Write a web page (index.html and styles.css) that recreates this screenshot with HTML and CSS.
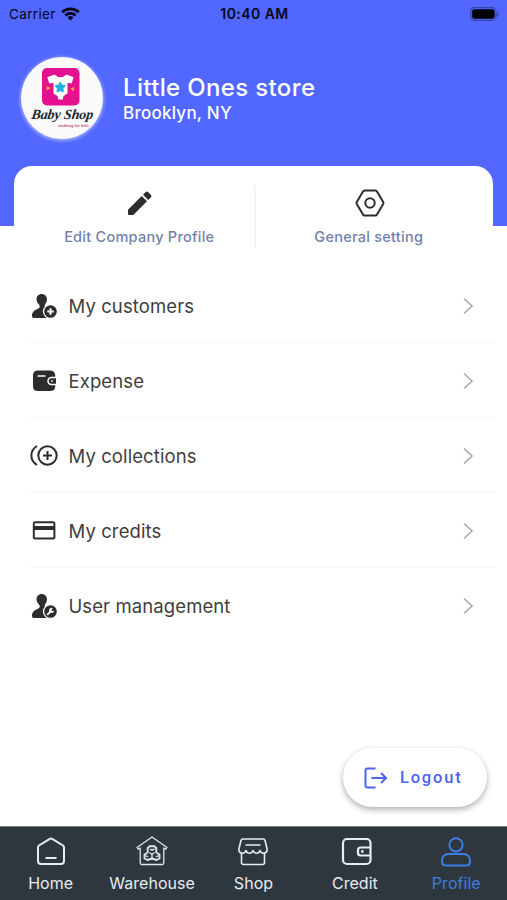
FILE: index.html
```html
<!DOCTYPE html>
<html lang="en">
<head>
  <meta charset="UTF-8">
  <meta name="viewport" content="width=device-width, initial-scale=1.0">
  <title>Profile</title>
  <link rel="stylesheet" href="styles.css">
</head>
<body>
  <div class="screen">
    <header class="header">
      <div class="status-bar">
        <div class="carrier">
          <span>Carrier</span>
          <svg width="19" height="14" viewBox="0 0 19 14" fill="none" stroke="#050817" stroke-width="2.7">
            <path d="M1.2 5.3a12 12 0 0 1 16.6 0M4.3 8.5a7.6 7.6 0 0 1 10.4 0"/>
            <path d="M9.5 13.5 6.5 10.5a4.4 4.4 0 0 1 6 0z" fill="#050817" stroke="none"/>
          </svg>
        </div>
        <span class="time">10:40 AM</span>
        <svg class="battery" width="30" height="14" viewBox="0 0 30 14">
          <rect x=".7" y=".7" width="25.4" height="12.6" rx="3.8" fill="none" stroke="#3443a8" stroke-width="1.2"/>
          <rect x="2.2" y="2.2" width="22.4" height="9.6" rx="2.3" fill="#000"/>
          <path d="M27.5 5v4.200q1.600-.7 1.600-2.100t-1.600-2.100z" fill="#3443a8"/>
        </svg>
      </div>
      <div class="store">
        <div class="avatar">
          <svg width="82" height="82" viewBox="0 0 82 82">
            <rect x="21" y="11" width="37.500" height="37.500" rx="5" fill="#e5108f"/>
            <path d="M33.500 17.500q6 5.500 12 0l7 2.700-1.800 6.300-4.200-.8v10.800l-4 2.500-.8 3.500h-4.400l-.8-3.500-4-2.500V25.700l-4.200.8-2-6.300z" fill="#fff"/>
            <path d="m39.200 25.500 1.500 2.700 3.200.6-2.200 2.400.4 3.300-2.900-1.300-2.900 1.300.4-3.300-2.200-2.400 3.200-.6z" fill="#22b5e2" stroke="#22b5e2" stroke-width="1.500" stroke-linejoin="round"/>
            <path d="m25.500 29 4.200 2-4 2.500zM53.500 30l-4.300 1.600 3.600 3z" fill="#f9a72c"/>
            <g transform="translate(10 62) skewX(-8)">
              <text class="logo-name">Baby Shop</text>
            </g>
            <text class="logo-tagline" x="37" y="69.700" textLength="31" lengthAdjust="spacingAndGlyphs">clothing for kids</text>
          </svg>
        </div>
        <div class="store-info">
          <h1>Little Ones store</h1>
          <p>Brooklyn, NY</p>
        </div>
      </div>
    </header>

    <section class="actions">
      <a class="action">
        <svg class="pencil" width="28" height="28" viewBox="0 0 28 28" fill="#2d2d2d">
          <path d="M2 20.700 15.700 7l5.300 5.300L7.300 26H3q-1 0-1-1zM17 5.700l2.700-2.700q1.200-1 2.400 0l2.900 2.900q1 1.200 0 2.400L22.300 11z"/>
        </svg>
        <span>Edit Company Profile</span>
      </a>
      <a class="action">
        <svg class="hexagon" width="30" height="28" viewBox="0 0 30 28" fill="none" stroke="#2d2d2d" stroke-width="2" stroke-linejoin="round">
          <path d="M9.500 1.500h11q1 0 1.500 1l6.200 10.500q.6 1 0 2L22 25.500q-.5 1-1.500 1h-11q-1 0-1.500-1L1.800 15q-.6-1 0-2L8 2.500q.5-1 1.500-1z"/>
          <circle cx="15" cy="14" r="4.700"/>
        </svg>
        <span>General setting</span>
      </a>
    </section>

    <ul class="menu">
      <li>
        <svg class="icon" width="28" height="28" viewBox="0 0 28 28">
          <path d="M11.700 2c3.200 0 5.300 2.300 5.300 5.300 0 2.200-1 3.800-2 5.100-.7 1.200-.1 2.200 1.200 2.800l3.800 1.600v9.200H4q-2.100 0-2.100-1.900 0-4.300 3.600-6.100l2.800-1.400c1.600-.8 1.900-2 1-3.500C8 11.500 6.500 9.700 6.500 7.300 6.500 4.300 8.500 2 11.700 2z" fill="#2d2d2d"/>
          <circle cx="20.500" cy="19.500" r="7.600" fill="#fff"/>
          <circle cx="20.500" cy="19.500" r="6.300" fill="#2d2d2d"/>
          <path d="M20.500 16.300v6.400M17.300 19.500h6.400" stroke="#fff" stroke-width="2"/>
        </svg>
        <span class="label">My customers</span>
        <svg class="arrow" width="12" height="18" viewBox="0 0 12 18"><path d="m2 1.500 8 7.500-8 7.500"/></svg>
      </li>
      <li>
        <svg class="icon" width="28" height="28" viewBox="0 0 28 28">
          <path d="M8 3.500h12q4.800 0 5.200 4.500v12q-.2 4-5.200 4H8q-5 0-5-4.500V8.500q0-5 5-5z" fill="#2d2d2d"/>
          <path d="M7.500 9h8" stroke="#fff" stroke-width="1.500"/>
          <path d="M26 10.500h-4.500a3.500 3.500 0 0 0 0 7H26" fill="#2d2d2d" stroke="#fff" stroke-width="1.500"/>
          <path d="M21.200 14h1.600" stroke="#fff" stroke-width="1.500"/>
        </svg>
        <span class="label">Expense</span>
        <svg class="arrow" width="12" height="18" viewBox="0 0 12 18"><path d="m2 1.500 8 7.500-8 7.500"/></svg>
      </li>
      <li>
        <svg class="icon" width="28" height="28" viewBox="0 0 28 28" fill="none" stroke="#2d2d2d" stroke-width="2">
          <circle cx="17.500" cy="13.500" r="9.200"/>
          <path d="M17.500 9v9M13 13.500h9M7 4C-.5 8.500-.5 18.500 7 23"/>
        </svg>
        <span class="label">My collections</span>
        <svg class="arrow" width="12" height="18" viewBox="0 0 12 18"><path d="m2 1.500 8 7.500-8 7.500"/></svg>
      </li>
      <li>
        <svg class="icon" width="28" height="28" viewBox="0 0 28 28">
          <rect x="3.800" y="5.300" width="20.600" height="16.200" rx="1.500" fill="none" stroke="#2d2d2d" stroke-width="2"/>
          <path d="M3 11h22" stroke="#2d2d2d" stroke-width="4"/>
        </svg>
        <span class="label">My credits</span>
        <svg class="arrow" width="12" height="18" viewBox="0 0 12 18"><path d="m2 1.500 8 7.500-8 7.500"/></svg>
      </li>
      <li>
        <svg class="icon" width="28" height="28" viewBox="0 0 28 28">
          <path d="M11.700 2c3.200 0 5.300 2.300 5.300 5.300 0 2.200-1 3.800-2 5.100-.7 1.200-.1 2.200 1.200 2.800l3.800 1.600v9.200H4q-2.100 0-2.100-1.900 0-4.300 3.600-6.100l2.800-1.400c1.600-.8 1.900-2 1-3.500C8 11.500 6.500 9.700 6.500 7.300 6.500 4.300 8.500 2 11.700 2z" fill="#2d2d2d"/>
          <circle cx="20.500" cy="19.500" r="7.600" fill="#fff"/>
          <circle cx="20.500" cy="19.500" r="6.300" fill="#2d2d2d"/>
          <path d="m17.200 22.800 4.200-4.200" stroke="#fff" stroke-width="1.900"/>
          <path d="M22.800 16.200a2.500 2.500 0 1 0 1.300 2.500l-1.800.2-1-1z" fill="#fff"/>
        </svg>
        <span class="label">User management</span>
        <svg class="arrow" width="12" height="18" viewBox="0 0 12 18"><path d="m2 1.500 8 7.500-8 7.500"/></svg>
      </li>
    </ul>

    <button class="logout-btn">
      <svg width="24" height="22" viewBox="0 0 24 22" fill="none" stroke="#4b63ee" stroke-width="2">
        <path d="M11.500 1.500H3.500q-2 0-2 2v15q0 2 2 2h8M7.500 11h14M17 6l5 5-5 5"/>
      </svg>
      <span>Logout</span>
    </button>

    <nav class="tab-bar">
      <a class="tab">
        <svg width="32" height="32" viewBox="0 0 32 32" fill="none" stroke="#e4edf3" stroke-width="2" stroke-linejoin="round">
          <path d="M16 2.500q.6 0 1.200.4l10.800 6.600q1 .7 1 1.800V25q0 3-3 3H6q-3 0-3-3V11.300q0-1.100 1-1.800l10.800-6.600q.6-.4 1.200-.4zM10.500 22h11"/>
        </svg>
        <span>Home</span>
      </a>
      <a class="tab">
        <svg width="32" height="32" viewBox="0 0 32 32" fill="none" stroke="#dbe5eb" stroke-width="1.300" stroke-linejoin="round">
          <path d="M16 1 1 11.500l1.200 1.700 2-1.200v15q0 1.500 1.500 1.500h20.600q1.500 0 1.500-1.500V12l2 1.200 1.200-1.700z"/>
          <path d="M13.500 10.200h5l1.800 2v4.300l3.200 2v4L20.500 24 16 22.500 11.500 24l-3-1.500v-4l3.200-2v-4.300z" stroke-width="1.900"/>
          <path d="m14 13 2 1.200 2.500-1.200M16 22v-3.500l-2.500-2M16 18.500l2.500-2M9.500 19.500l2.500 1.300M22.500 19.500 20 20.800" stroke-width="1.400"/>
        </svg>
        <span>Warehouse</span>
      </a>
      <a class="tab">
        <svg width="32" height="32" viewBox="0 0 32 32" fill="none" stroke="#e4edf3" stroke-width="1.600" stroke-linejoin="round">
          <path d="M6 3h20q1.700 0 2.100 1.700l2 8.300c.5 5-5.600 5.600-7.100 1.500-1.500 3.700-5.500 3.700-7 0-1.500 3.700-5.500 3.700-7 0C7.500 18.600 1.400 18 1.900 13l2-8.300Q4.300 3 6 3zM4.500 16.500v10q0 2 2 2h19q2 0 2-2v-10"/>
          <path d="M9 9h14" stroke-linecap="round"/>
        </svg>
        <span>Shop</span>
      </a>
      <a class="tab">
        <svg class="wallet" width="32" height="32" viewBox="0 0 32 32" fill="none" stroke="#e4edf3" stroke-width="2.200">
          <rect x="2" y="3" width="27.500" height="25" rx="4"/>
          <path d="M29.500 11.500h-10q-2.500 0-2.500 2.500v3q0 2.500 2.500 2.500h10"/>
          <circle cx="21.300" cy="15.500" r=".8" stroke-width="1.300"/>
        </svg>
        <span>Credit</span>
      </a>
      <a class="tab tab--active">
        <svg width="32" height="32" viewBox="0 0 32 32" fill="none" stroke="#3c7de3" stroke-width="2">
          <circle cx="16" cy="8.800" r="6.600"/>
          <path d="M8.500 18h15q6.500 0 6.500 7.500 0 4-3.500 4h-21q-3.500 0-3.500-4Q2 18 8.500 18z"/>
        </svg>
        <span>Profile</span>
      </a>
    </nav>
  </div>
</body>
</html>
```

FILE: styles.css
```css
* {
  box-sizing: border-box;
}

body {
  margin: 0;
  background: #fff;
  font-family: Inter, "Liberation Sans", sans-serif;
  color: #3e3e3e;
}

.screen {
  display: flex;
  flex-direction: column;
  height: 900px;
  overflow: hidden;
}

.header {
  flex: none;
  height: 226px;
  background: #5167ff;
}

.status-bar {
  display: grid;
  grid-template-columns: 1fr auto 1fr;
  align-items: center;
  height: 27px;
  padding: 0 7px 0 9px;
  font-size: 13.5px;
  color: #050817;
}

.carrier {
  display: flex;
  align-items: center;
  gap: 5px;
  letter-spacing: 0.35px;
}

.time {
  font-size: 14px;
  font-weight: 600;
  letter-spacing: 0.45px;
}

.battery {
  justify-self: end;
}

.store {
  display: flex;
  align-items: center;
  gap: 20px;
  padding: 30px 21px 0;
  color: #fff;
}

.avatar {
  width: 82px;
  height: 82px;
  border-radius: 50%;
  background: #fafafb;
  box-shadow: 0 1px 4px #cbd2ff;
}

.avatar svg {
  display: block;
}

.logo-name {
  font: italic bold 14px "Liberation Serif", serif;
  letter-spacing: -0.1px;
  fill: #20242b;
}

.logo-tagline {
  font: bold 3.5px "Liberation Sans", sans-serif;
  fill: #c6507c;
}

.store-info h1 {
  margin: 3px 0 0;
  font-size: 24px;
  line-height: 28px;
  font-weight: 500;
  letter-spacing: 0.35px;
}

.store-info p {
  margin: 0;
  font-size: 17px;
  line-height: 23px;
  font-weight: 500;
  letter-spacing: 0.25px;
}

.actions {
  display: grid;
  grid-template-columns: 1fr 1fr;
  flex: none;
  height: 102px;
  margin: -60px 14px 0;
  border-radius: 18px 18px 0 0;
  background: #fff;
}

.action {
  display: flex;
  flex-direction: column;
  align-items: center;
  gap: 10px;
  height: 80px;
  margin-top: 19px;
  padding: 4px 0 0 11px;
  font-size: 14.5px;
  line-height: 20px;
  font-weight: 500;
  letter-spacing: 0.25px;
  color: #7181ac;
}

.action:last-child {
  padding: 4px 11px 0 0;
  border-left: 2px solid #f5f5f7;
  height: 63px;
}

.pencil {
  margin-left: 2px;
}

.hexagon {
  margin-left: 3px;
}

.menu {
  flex: none;
  margin: 0;
  padding: 0 11px 0 30px;
  list-style: none;
}

.menu li {
  display: flex;
  align-items: center;
  height: 75px;
  padding: 2px 22px 0 0;
  border-bottom: 1px solid #f8f8f8;
}

.menu li:last-child {
  padding-top: 1px;
  border-color: transparent;
}

.label {
  margin-left: 10.5px;
  font-size: 18.5px;
  letter-spacing: 0.1px;
}

.arrow {
  margin-left: auto;
  fill: none;
  stroke: #a9a9a9;
  stroke-width: 1.6;
}

.logout-btn {
  display: flex;
  align-items: center;
  gap: 12px;
  align-self: flex-end;
  width: 144px;
  height: 59px;
  margin: auto 20px 19px 0;
  padding: 0 0 0 21px;
  border: none;
  border-radius: 30px;
  background: #fff;
  box-shadow: 0 3px 6px rgba(0, 0, 0, 0.28), 0 0 4px rgba(0, 0, 0, 0.06);
  font: 500 16.5px Roboto, sans-serif;
  letter-spacing: 1.8px;
  color: #4b63ee;
}

.tab-bar {
  display: grid;
  grid-template-columns: repeat(5, 1fr);
  flex: none;
  height: 74px;
  border-top: 1px solid #758084;
  background: #2f373e;
}

.tab {
  display: flex;
  flex-direction: column;
  align-items: center;
  gap: 4px;
  padding-top: 9px;
  font-size: 16px;
  line-height: 22px;
  letter-spacing: 0.05px;
  color: #e4edf3;
}

.wallet {
  margin-left: 5px;
}

.tab--active {
  color: #3c7de3;
}
```
